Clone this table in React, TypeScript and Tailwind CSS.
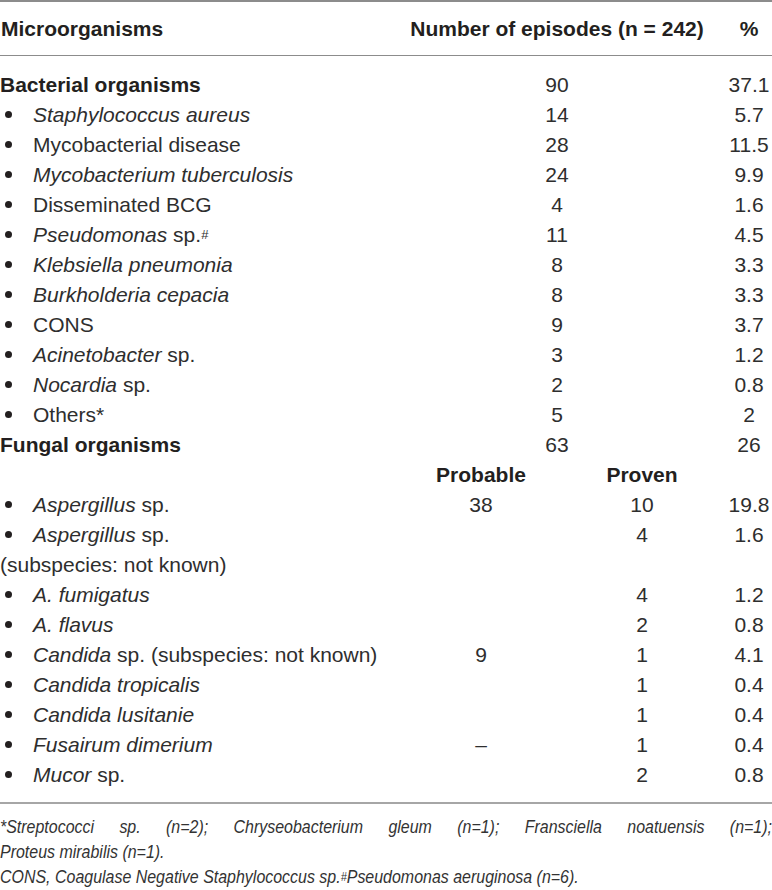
import type { ReactNode } from 'react'

type Row = {
  kind: 'group' | 'item' | 'plain' | 'sub'
  name: ReactNode
  prob?: ReactNode
  num?: string
  proven?: ReactNode
  pct?: string
}

const rows: Row[] = [
  { kind: 'group', name: 'Bacterial organisms', num: '90', pct: '37.1' },
  { kind: 'item', name: <i>Staphylococcus aureus</i>, num: '14', pct: '5.7' },
  { kind: 'item', name: 'Mycobacterial disease', num: '28', pct: '11.5' },
  { kind: 'item', name: <i>Mycobacterium tuberculosis</i>, num: '24', pct: '9.9' },
  { kind: 'item', name: 'Disseminated BCG', num: '4', pct: '1.6' },
  {
    kind: 'item',
    name: (
      <>
        <i>Pseudomonas</i> sp.<sup className="text-[13px] relative -top-[3px]">#</sup>
      </>
    ),
    num: '11',
    pct: '4.5',
  },
  { kind: 'item', name: <i>Klebsiella pneumonia</i>, num: '8', pct: '3.3' },
  { kind: 'item', name: <i>Burkholderia cepacia</i>, num: '8', pct: '3.3' },
  { kind: 'item', name: 'CONS', num: '9', pct: '3.7' },
  { kind: 'item', name: <><i>Acinetobacter</i> sp.</>, num: '3', pct: '1.2' },
  { kind: 'item', name: <><i>Nocardia</i> sp.</>, num: '2', pct: '0.8' },
  { kind: 'item', name: 'Others*', num: '5', pct: '2' },
  { kind: 'group', name: 'Fungal organisms', num: '63', pct: '26' },
  { kind: 'sub', name: '', prob: 'Probable', proven: 'Proven' },
  { kind: 'item', name: <><i>Aspergillus</i> sp.</>, prob: '38', proven: '10', pct: '19.8' },
  { kind: 'item', name: <><i>Aspergillus</i> sp.</>, proven: '4', pct: '1.6' },
  { kind: 'plain', name: '(subspecies: not known)' },
  { kind: 'item', name: <i>A. fumigatus</i>, proven: '4', pct: '1.2' },
  { kind: 'item', name: <i>A. flavus</i>, proven: '2', pct: '0.8' },
  {
    kind: 'item',
    name: <><i>Candida</i> sp. (subspecies: not known)</>,
    prob: '9',
    proven: '1',
    pct: '4.1',
  },
  { kind: 'item', name: <i>Candida tropicalis</i>, proven: '1', pct: '0.4' },
  { kind: 'item', name: <i>Candida lusitanie</i>, proven: '1', pct: '0.4' },
  { kind: 'item', name: <i>Fusairum dimerium</i>, prob: '–', proven: '1', pct: '0.4' },
  { kind: 'item', name: <><i>Mucor</i> sp.</>, proven: '2', pct: '0.8' },
]

function TableRow({ row }: { row: Row }) {
  const group = row.kind === 'group'
  const sub = row.kind === 'sub'
  return (
    <div
      className={`grid grid-cols-[430px_102px_50px_120px_1fr_46px] h-[30px] items-center leading-[24px] ${
        sub ? 'font-bold text-[#231f20]' : ''
      }`}
    >
      <div className={`flex items-center whitespace-nowrap ${group ? 'font-bold text-[#231f20]' : ''}`}>
        {row.kind === 'item' && (
          <span className="w-[33px] shrink-0 flex items-center pl-[5px]">
            <span className="block w-[7px] h-[7px] rounded-full bg-[#231f20] relative top-[-1px]" />
          </span>
        )}
        <span>{row.name}</span>
      </div>
      <div className="text-center">{row.prob}</div>
      <div className="text-center">{row.num}</div>
      <div className="text-center">{row.proven}</div>
      <div />
      <div className="text-center">{row.pct}</div>
    </div>
  )
}

export default function App() {
  return (
    <div className="w-[772px] overflow-hidden bg-white text-[#2e2e2e] font-['Liberation_Sans',Arial,sans-serif] text-[21px]">
      <div className="border-t-[2px] border-b border-[#8c8c8c] h-[56px] grid grid-cols-[397px_320px_1fr_46px] items-center font-bold leading-[24px] text-[#231f20]">
        <div className="pl-[1px]">Microorganisms</div>
        <div className="text-center">Number of episodes (n = 242)</div>
        <div />
        <div className="text-center">%</div>
      </div>
      <div className="pt-[14px] pb-[12px] border-b-[2px] border-[#a6a6a6]">
        {rows.map((r, i) => (
          <TableRow key={i} row={r} />
        ))}
      </div>
      <div className="pt-[10px] italic text-[19px] leading-[25px] text-[#333]">
        <div className="w-[919px] origin-left scale-x-[0.84]">
          <p className="text-justify [text-align-last:justify]">
            *Streptococci sp. (n=2); Chryseobacterium gleum (n=1); Fransciella noatuensis (n=1);
          </p>
          <p>Proteus mirabilis (n=1).</p>
          <p>
            CONS, Coagulase Negative Staphylococcus sp.
            <sup className="text-[13px] relative -top-[2px]">#</sup>Pseudomonas aeruginosa (n=6).
          </p>
        </div>
      </div>
    </div>
  )
}
